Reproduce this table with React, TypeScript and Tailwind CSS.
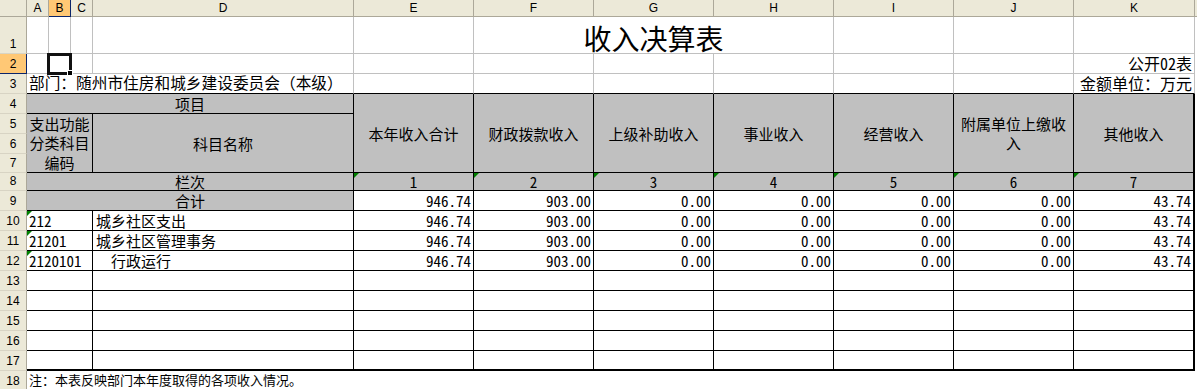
import React from "react";

const COLS =
  "grid-cols-[27px_22px_22px_22px_261px_120px_120px_120px_120px_120px_120px_121px_1fr]";
const ROWS =
  "grid-rows-[17px_37px_20px_20px_20px_20px_20px_19px_18px_20px_20px_20px_20px_20px_20px_20px_20px_20px_20px]";

const CJK = "font-['Noto_Sans_Mono_CJK_SC','Noto_Sans_CJK_SC',sans-serif]";
const NUM = "font-['Noto_Sans_Mono_CJK_SC','Liberation_Mono',monospace]";
const HEAD_FONT = "font-['Liberation_Sans',Arial,sans-serif]";

const LETTERS = ["A", "B", "C", "D", "E", "F", "G", "H", "I", "J", "K"];
const VALUES = ["946.74", "903.00", "0.00", "0.00", "0.00", "0.00", "43.74"];

const ITEMS = [
  { row: 10, code: "212", name: "城乡社区支出", indent: false },
  { row: 11, code: "21201", name: "城乡社区管理事务", indent: false },
  { row: 12, code: "2120101", name: "行政运行", indent: true },
];

function ColHead({ label, active }: { label: string; active?: boolean }) {
  return (
    <div
      className={`flex items-center justify-center border-b border-r text-[12px] leading-none ${HEAD_FONT} ${
        active
          ? "bg-[#FFC875] border-b-[#0A246A] border-r-[#0A246A]"
          : "bg-[#ECE9D8] border-b-[#ACA899] border-r-[#ACA899]"
      }`}
    >
      {label}
    </div>
  );
}

function RowHead({ n, active }: { n: number; active?: boolean }) {
  return (
    <div
      className={`flex items-end justify-center pb-[3px] border-r border-b text-[12px] leading-none ${HEAD_FONT} ${
        active
          ? "bg-[#FFC875] border-r-[#0A246A] border-b-[#0A246A]"
          : "bg-[#ECE9D8] border-r-[#ACA899] border-b-[#D8D4C4]"
      }`}
    >
      {n}
    </div>
  );
}

// green "number stored as text" marker in a cell's top-left corner
function Flag() {
  return (
    <div className="absolute left-0 top-0 h-0 w-0 border-t-[5px] border-r-[5px] border-t-[#008000] border-r-transparent" />
  );
}

// plain cell with light gridlines (outside the table)
function Blank({ className = "" }: { className?: string }) {
  return <div className={`border-r border-b border-[#C0C0C0] ${className}`} />;
}

export default function App() {
  return (
    <div className="h-[389px] w-[1197px] overflow-hidden bg-white text-black">
      <div className={`grid ${COLS} ${ROWS} ${CJK}`}>
        {/* column headers */}
        <div className="border-r border-b border-[#ACA899] bg-[#ECE9D8]" />
        {LETTERS.map((l) => (
          <ColHead key={l} label={l} active={l === "B"} />
        ))}
        <div className="border-b border-[#ACA899] bg-[#ECE9D8]" />

        {/* row 1 : title */}
        <RowHead n={1} />
        <Blank />
        <Blank />
        <Blank />
        <Blank />
        <Blank />
        <div className="col-span-3 flex items-end justify-center pb-[1px] border-r border-b border-[#C0C0C0] text-[28px] leading-none">
          收入决算表
        </div>
        <Blank />
        <Blank />
        <Blank />
        <div />

        {/* row 2 */}
        <RowHead n={2} active />
        <Blank />
        <div className="relative border-r border-b border-[#C0C0C0]">
          <div className="absolute -left-[2px] -top-px h-[22px] w-[25px] border-[3px] border-[#111]" />
          <div className="absolute left-[18px] top-[16px] h-[6px] w-[6px] border border-white bg-black" />
        </div>
        <Blank />
        <Blank />
        <Blank />
        <Blank />
        <Blank />
        <Blank />
        <Blank />
        <Blank />
        <div className="flex items-end justify-end pr-[2px] pb-[2px] border-r border-b border-[#C0C0C0] text-[16px] leading-none whitespace-nowrap">
          公开02表
        </div>
        <div />

        {/* row 3 */}
        <RowHead n={3} />
        <div className="col-span-4 flex items-end pl-[2px] pb-[2px] border-r border-b border-r-[#C0C0C0] border-b-black text-[15.7px] leading-none whitespace-nowrap">
          部门：随州市住房和城乡建设委员会（本级）
        </div>
        {[0, 1, 2, 3, 4, 5].map((i) => (
          <div key={i} className="border-r border-b border-r-[#C0C0C0] border-b-black" />
        ))}
        <div className="flex items-end justify-end pr-[2px] pb-[2px] border-r border-b border-r-[#C0C0C0] border-b-black text-[16px] leading-none whitespace-nowrap">
          金额单位：万元
        </div>
        <div />

        {/* rows 4-7 : table head */}
        <RowHead n={4} />
        <div className="col-span-4 flex items-end justify-center pb-[2px] border-r border-b border-black bg-[#C0C0C0] text-[15px] leading-none">
          项目
        </div>
        <div className="row-span-4 flex items-center justify-center border-r border-b border-black bg-[#C0C0C0] text-[15px] leading-none">
          本年收入合计
        </div>
        <div className="row-span-4 flex items-center justify-center border-r border-b border-black bg-[#C0C0C0] text-[15px] leading-none">
          财政拨款收入
        </div>
        <div className="row-span-4 flex items-center justify-center border-r border-b border-black bg-[#C0C0C0] text-[15px] leading-none">
          上级补助收入
        </div>
        <div className="row-span-4 flex items-center justify-center border-r border-b border-black bg-[#C0C0C0] text-[15px] leading-none">
          事业收入
        </div>
        <div className="row-span-4 flex items-center justify-center border-r border-b border-black bg-[#C0C0C0] text-[15px] leading-none">
          经营收入
        </div>
        <div className="row-span-4 flex items-center justify-center border-r border-b border-black bg-[#C0C0C0] text-center text-[15px] leading-[19px]">
          附属单位上缴收
          <br />入
        </div>
        <div className="row-span-4 flex items-center justify-center border-r-2 border-b border-black bg-[#C0C0C0] text-[15px] leading-none">
          其他收入
        </div>
        <div />

        <RowHead n={5} />
        <div className="col-span-3 row-span-3 flex items-center justify-center border-r border-b border-black bg-[#C0C0C0] text-center text-[15px] leading-[19.5px]">
          支出功能
          <br />
          分类科目
          <br />
          编码
        </div>
        <div className="row-span-3 flex items-center justify-center border-r border-b border-black bg-[#C0C0C0] text-[15px] leading-none">
          科目名称
        </div>
        <div />

        <RowHead n={6} />
        <div />
        <RowHead n={7} />
        <div />

        {/* row 8 : column numbers */}
        <RowHead n={8} />
        <div className="col-span-4 flex items-end justify-center pb-[1px] border-r border-b border-black bg-[#C0C0C0] text-[15px] leading-none">
          栏次
        </div>
        {[1, 2, 3, 4, 5, 6, 7].map((n) => (
          <div
            key={n}
            className={`relative flex items-end justify-center pb-[1px] border-b border-black bg-[#C0C0C0] text-[15px] leading-none ${NUM} ${
              n === 7 ? "border-r-2" : "border-r"
            }`}
          >
            <Flag />
            {n}
          </div>
        ))}
        <div />

        {/* row 9 : total */}
        <RowHead n={9} />
        <div className="col-span-4 flex items-end justify-center pb-[2px] border-r border-b border-black bg-[#C0C0C0] text-[15px] leading-none">
          合计
        </div>
        {VALUES.map((v, i) => (
          <div
            key={i}
            className={`flex items-end justify-end pr-[2px] pb-[2px] border-b border-black text-[15px] leading-none ${NUM} ${
              i === 6 ? "border-r-2" : "border-r"
            }`}
          >
            {v}
          </div>
        ))}
        <div />

        {/* rows 10-12 : items */}
        {ITEMS.map((it) => (
          <React.Fragment key={it.row}>
            <RowHead n={it.row} />
            <div className={`relative col-span-3 flex items-end pl-[2px] pb-[2px] border-r border-b border-black text-[15px] leading-none ${NUM}`}>
              <Flag />
              {it.code}
            </div>
            <div
              className={`flex items-end pb-[2px] border-r border-b border-black text-[15px] leading-none ${
                it.indent ? "pl-[18px]" : "pl-[3px]"
              }`}
            >
              {it.name}
            </div>
            {VALUES.map((v, i) => (
              <div
                key={i}
                className={`flex items-end justify-end pr-[2px] pb-[2px] border-b border-black text-[15px] leading-none ${NUM} ${
                  i === 6 ? "border-r-2" : "border-r"
                }`}
              >
                {v}
              </div>
            ))}
            <div />
          </React.Fragment>
        ))}

        {/* rows 13-17 : empty */}
        {[13, 14, 15, 16, 17].map((r) => (
          <React.Fragment key={r}>
            <RowHead n={r} />
            <div className={`col-span-3 border-r border-black ${r === 17 ? "border-b-2" : "border-b"}`} />
            <div className={`border-r border-black ${r === 17 ? "border-b-2" : "border-b"}`} />
            {[0, 1, 2, 3, 4, 5, 6].map((i) => (
              <div
                key={i}
                className={`border-black ${i === 6 ? "border-r-2" : "border-r"} ${r === 17 ? "border-b-2" : "border-b"}`}
              />
            ))}
            <div />
          </React.Fragment>
        ))}

        {/* row 18 : note */}
        <RowHead n={18} />
        <div className="col-span-11 flex items-end pl-[2px] pb-[5px] text-[13px] leading-none whitespace-nowrap">
          注：本表反映部门本年度取得的各项收入情况。
        </div>
        <div />
      </div>
    </div>
  );
}
